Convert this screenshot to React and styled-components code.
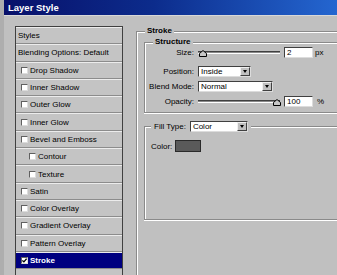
import React from "react";
import styled, { createGlobalStyle } from "styled-components";

const GlobalStyle = createGlobalStyle`
  html, body {
    margin: 0;
    padding: 0;
    background: #c0c0c0;
  }
  body {
    font-family: "Liberation Sans", Arial, sans-serif;
    font-size: 8px;
    color: #000;
  }
`;

const listItems = [
  { label: "Styles", kind: "plain" },
  { label: "Blending Options: Default", kind: "plain" },
  { label: "Drop Shadow" },
  { label: "Inner Shadow" },
  { label: "Outer Glow" },
  { label: "Inner Glow" },
  { label: "Bevel and Emboss" },
  { label: "Contour", indent: true },
  { label: "Texture", indent: true },
  { label: "Satin" },
  { label: "Color Overlay" },
  { label: "Gradient Overlay" },
  { label: "Pattern Overlay" },
  { label: "Stroke", selected: true, checked: true },
];

function App() {
  return (
    <>
      <GlobalStyle />
      <Window>
        <TitleBar>Layer Style</TitleBar>
        <Body>
          <StyleList>
            {listItems.map((item) => (
              <ListItem
                key={item.label}
                $selected={item.selected}
                $pad={item.kind === "plain" ? 2 : item.indent ? 13 : 5}
              >
                {item.kind !== "plain" && (
                  <CheckBox>
                    {item.checked && (
                      <svg width="5" height="5" viewBox="0 0 5 5">
                        <path
                          d="M0.4 2.4 L1.9 3.9 L4.6 0.6"
                          fill="none"
                          stroke="#000"
                          strokeWidth="1.3"
                        />
                      </svg>
                    )}
                  </CheckBox>
                )}
                <span>{item.label}</span>
              </ListItem>
            ))}
          </StyleList>

          <OuterGroup>
            <Legend $ml={1}>Stroke</Legend>
            <InnerGroup>
              <Legend $ml={4}>Structure</Legend>
              <Row>
                <Label>Size:</Label>
                <Slider value={2} />
                <NumBox>2</NumBox>
                <Unit>px</Unit>
              </Row>
              <Row $top={8}>
                <Label>Position:</Label>
                <Select $w={53}>
                  <span>Inside</span>
                  <DropButton>
                    <Arrow />
                  </DropButton>
                </Select>
              </Row>
              <Row $top={4}>
                <Label>Blend Mode:</Label>
                <Select $w={75}>
                  <span>Normal</span>
                  <DropButton>
                    <Arrow />
                  </DropButton>
                </Select>
              </Row>
              <Row $top={4}>
                <Label>Opacity:</Label>
                <Slider value={100} />
                <NumBox>100</NumBox>
                <Unit $ml={4}>%</Unit>
              </Row>
            </InnerGroup>

            <FillGroup>
              <FillLegend>
                <span>Fill Type:</span>
                <Select $w={58}>
                  <span>Color</span>
                  <DropButton>
                    <Arrow />
                  </DropButton>
                </Select>
              </FillLegend>
              <ColorRow>
                <span>Color:</span>
                <Swatch $color="#5a5a5a" />
              </ColorRow>
            </FillGroup>
          </OuterGroup>
        </Body>
      </Window>
    </>
  );
}

function Slider({ value }) {
  // thumb travels over the track, 3px inset at each end
  const left = 3 + (value / 100) * 76;
  return (
    <SliderWrap>
      <Track />
      <Thumb style={{ left: `${left}px` }}>
        <svg width="8" height="7" viewBox="0 0 8 7">
          <path
            d="M0.5 6.5 V3.5 L4 0.5 L7.5 3.5 V6.5 Z"
            fill="#c8c8c8"
            stroke="#000"
            strokeWidth="1"
          />
        </svg>
      </Thumb>
    </SliderWrap>
  );
}

export default App;

const Window = styled.div`
  width: 337px;
  height: 275px;
  overflow: hidden;
  box-sizing: border-box;
  border-left: 4px solid #aeaeae;
  display: flex;
  flex-direction: column;
`;

const TitleBar = styled.div`
  flex: none;
  height: 16px;
  box-sizing: border-box;
  padding-left: 4px;
  display: flex;
  align-items: center;
  background: linear-gradient(90deg, #08106a 0%, #0c2c8c 45%, #2466d0 100%);
  color: #fff;
  font-weight: bold;
  font-size: 9.5px;
  border-bottom: 1px solid #d8d8d8;
`;

const Body = styled.div`
  flex: 1;
  min-height: 0;
  display: flex;
  align-items: stretch;
  gap: 13px;
  padding: 10px 0 0 11px;
`;

const StyleList = styled.div`
  flex: none;
  width: 108px;
  box-sizing: border-box;
  border: 1px solid #404040;
  border-bottom: none;
  background: #c4c4c4;
`;

const ListItem = styled.div`
  height: 17.3px;
  box-sizing: border-box;
  display: flex;
  align-items: center;
  gap: 2px;
  padding-left: ${(p) => p.$pad}px;
  border-top: 1px solid #ececec;
  border-bottom: 1px solid #8c8c8c;
  white-space: nowrap;
  background: ${(p) => (p.$selected ? "#000080" : "transparent")};
  color: ${(p) => (p.$selected ? "#fff" : "#000")};
  font-weight: ${(p) => (p.$selected ? "bold" : "normal")};
`;

const CheckBox = styled.span`
  flex: none;
  width: 7px;
  height: 7px;
  box-sizing: border-box;
  display: flex;
  align-items: center;
  justify-content: center;
  background: #fff;
  border-top: 1px solid #606060;
  border-left: 1px solid #606060;
  border-right: 1px solid #dcdcdc;
  border-bottom: 1px solid #dcdcdc;
`;

const OuterGroup = styled.fieldset`
  flex: none;
  width: 230px;
  margin: 0;
  padding: 1px 0 0 7px;
  min-width: 0;
  border: 1px solid #8a8a8a;
  border-right: none;
  border-bottom: none;
  box-shadow: inset 1px 1px 0 #fff;
  display: flex;
  flex-direction: column;
`;

const Legend = styled.legend`
  margin-left: ${(p) => p.$ml}px;
  padding: 0 2px;
  height: 10px;
  line-height: 10px;
  font-weight: bold;
  background: #c0c0c0;
`;

const InnerGroup = styled.fieldset`
  margin: 0;
  padding: 0 0 5px 4px;
  min-width: 0;
  border: 1px solid #8a8a8a;
  border-right: none;
  box-shadow: inset 1px 1px 0 #fff, 0 1px 0 #fff;
`;

const Row = styled.div`
  display: flex;
  align-items: center;
  height: 11px;
  margin-top: ${(p) => p.$top || 0}px;
`;

const Label = styled.span`
  flex: none;
  width: 45px;
  margin-right: 4px;
  text-align: right;
  white-space: nowrap;
`;

const SliderWrap = styled.div`
  position: relative;
  width: 82px;
  height: 11px;
  display: flex;
  align-items: center;
  margin-right: 4px;
`;

const Track = styled.div`
  width: 100%;
  height: 3px;
  box-sizing: border-box;
  background: #8a8a8a;
  border-top: 1px solid #404040;
  border-bottom: 1px solid #fff;
`;

const Thumb = styled.div`
  position: absolute;
  top: 3px;
  width: 8px;
  height: 7px;
  transform: translateX(-4px);
  line-height: 0;
`;

const NumBox = styled.div`
  flex: none;
  width: 29px;
  height: 11px;
  box-sizing: border-box;
  padding-left: 2px;
  line-height: 9px;
  background: #fff;
  border: 1px solid;
  border-color: #404040 #dcdcdc #dcdcdc #404040;
`;

const Unit = styled.span`
  margin-left: ${(p) => p.$ml || 2}px;
`;

const Select = styled.div`
  flex: none;
  width: ${(p) => p.$w}px;
  height: 11px;
  box-sizing: border-box;
  display: flex;
  align-items: center;
  justify-content: space-between;
  padding-left: 2px;
  background: #fff;
  border: 1px solid;
  border-color: #404040 #dcdcdc #dcdcdc #404040;
  font-weight: normal;
`;

const DropButton = styled.span`
  width: 10px;
  height: 9px;
  box-sizing: border-box;
  display: flex;
  align-items: center;
  justify-content: center;
  background: #c0c0c0;
  border: 1px solid;
  border-color: #f0f0f0 #404040 #404040 #f0f0f0;
`;

const Arrow = styled.span`
  width: 0;
  height: 0;
  border-left: 2.5px solid transparent;
  border-right: 2.5px solid transparent;
  border-top: 3px solid #000;
`;

const FillGroup = styled.fieldset`
  margin: 8px 0 0 0;
  padding: 8px 0 0 6px;
  height: 99px;
  box-sizing: border-box;
  min-width: 0;
  border: 1px solid #8a8a8a;
  border-right: none;
  box-shadow: inset 1px 1px 0 #fff, 0 1px 0 #fff;
`;

const FillLegend = styled.legend`
  padding: 0 3px;
  height: 11px;
  display: flex;
  align-items: center;
  gap: 4px;
  background: #c0c0c0;
`;

const ColorRow = styled.div`
  display: flex;
  align-items: center;
  gap: 3px;
  height: 12px;
`;

const Swatch = styled.div`
  width: 26px;
  height: 12px;
  box-sizing: border-box;
  background: ${(p) => p.$color};
  border: 1px solid #2a2a2a;
`;
